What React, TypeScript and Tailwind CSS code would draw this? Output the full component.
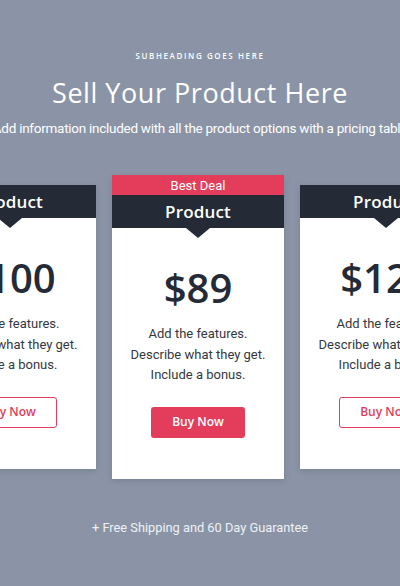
import React from 'react'

const HEAD = "font-['Open_Sans',sans-serif]"
const BODY = "font-['Roboto',sans-serif]"

interface Plan {
  price: string
  featured?: boolean
}

const PLANS: Plan[] = [{ price: '$100' }, { price: '$89', featured: true }, { price: '$129' }]

function Card({ plan }: { plan: Plan }) {
  return (
    <div className="w-[172px] shrink-0 bg-white shadow-[0_2px_6px_rgba(0,0,0,0.12)] flex flex-col">
      {plan.featured && (
        <div className={`h-[20px] bg-[#e33d5b] text-white text-[13px] leading-[21px] text-center ${BODY}`}>
          Best Deal
        </div>
      )}
      <div className="relative bg-[#242a36] h-[33px] flex items-center justify-center">
        <span className={`text-white text-[17px] font-semibold tracking-[0.01em] ${HEAD}`}>Product</span>
        <span className="absolute left-1/2 -translate-x-1/2 top-full w-0 h-0 border-l-[12px] border-r-[12px] border-t-[10px] border-l-transparent border-r-transparent border-t-[#242a36]" />
      </div>
      <div className="flex flex-col items-center pt-[36px] pb-[41px]">
        <div className={`text-[40px] leading-[48px] font-semibold text-[#242a36] ${HEAD}`}>{plan.price}</div>
        <div className={`mt-[12px] text-[13px] leading-[20.5px] text-[#333842] text-center ${BODY}`}>
          <p>Add the features.</p>
          <p>Describe what they get.</p>
          <p>Include a bonus.</p>
        </div>
        <button
          className={`mt-[21px] w-[94px] h-[31px] rounded-[3px] text-[12px] font-semibold ${HEAD} ${
            plan.featured
              ? 'bg-[#e33d5b] text-white'
              : 'bg-white text-[#e33d5b] border border-[#e33d5b]'
          }`}
        >
          Buy Now
        </button>
      </div>
    </div>
  )
}

export default function App() {
  return (
    <div className="w-full h-[586px] overflow-hidden bg-[#8a94a6] flex flex-col items-center">
      <div className={`mt-[50px] text-[8px] tracking-[0.2em] text-white font-semibold ${HEAD}`}>
        SUBHEADING GOES HERE
      </div>
      <h1 className={`mt-[14px] text-[27px] leading-[34px] font-medium tracking-[0.02em] text-white ${HEAD}`}>
        Sell Your Product Here
      </h1>
      <p className={`mt-[7px] whitespace-nowrap text-[13.5px] tracking-[-0.02em] leading-[22px] text-white ${BODY}`}>
        Add information included with all the product options with a pricing table
      </p>
      <div className="mt-[36px] w-full pr-[4px] flex items-center justify-center gap-[16px]">
        {PLANS.map((p) => (
          <Card key={p.price} plan={p} />
        ))}
      </div>
      <div className={`mt-[39px] text-[12.8px] text-[#eef1f5] ${BODY}`}>+ Free Shipping and 60 Day Guarantee</div>
    </div>
  )
}
